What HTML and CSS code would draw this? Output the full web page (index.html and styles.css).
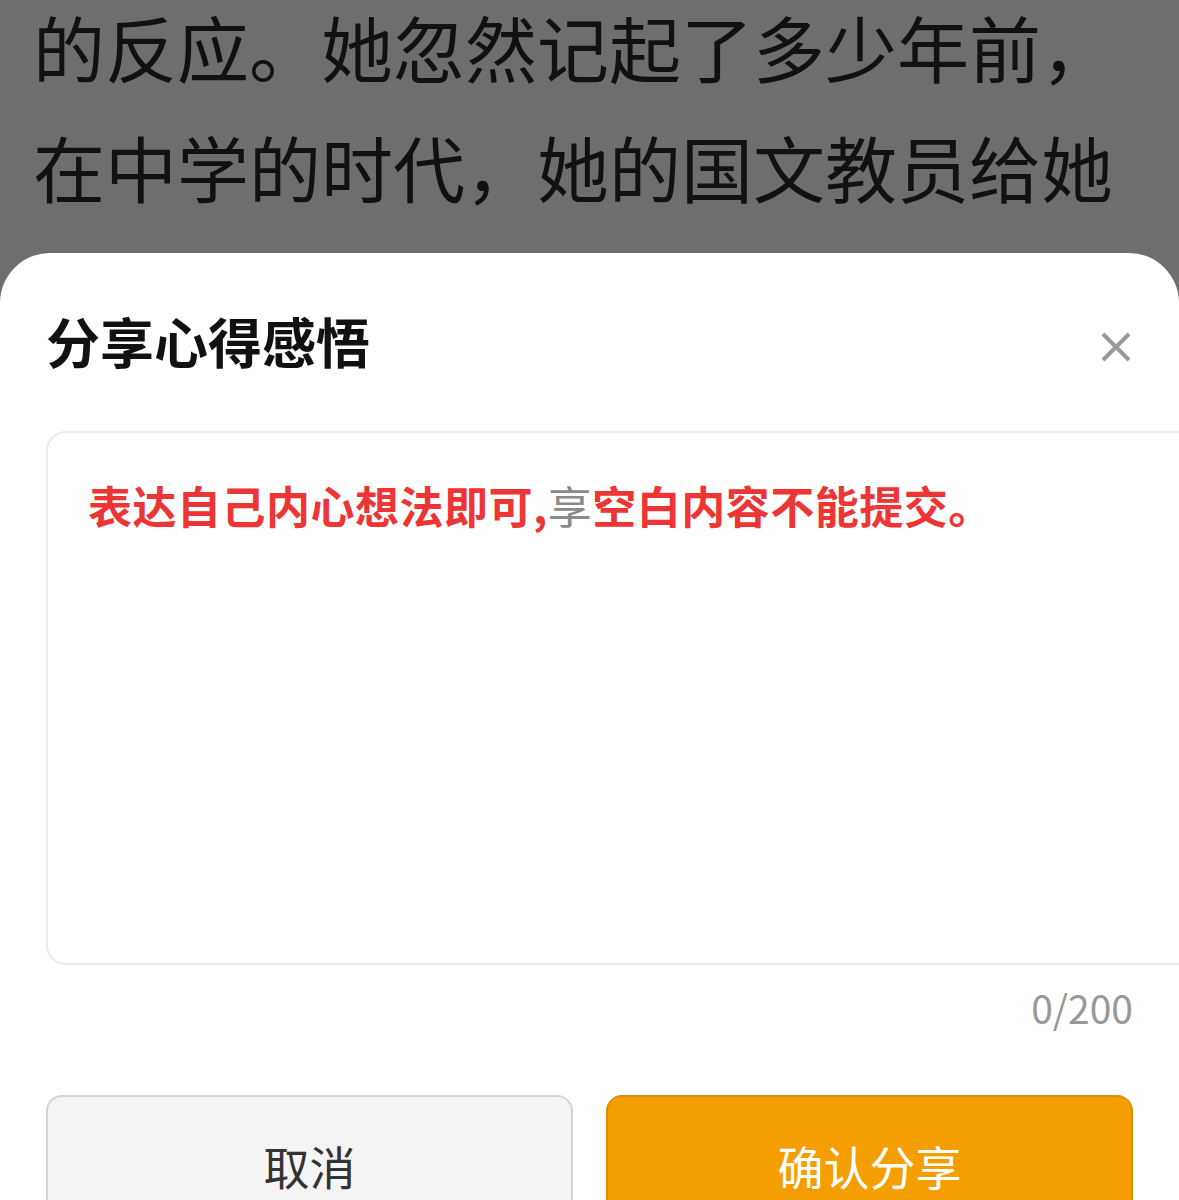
FILE: index.html
```html
<!DOCTYPE html>
<html lang="zh-CN">
<head>
  <meta charset="UTF-8" />
  <meta name="viewport" content="width=device-width, initial-scale=1.0"/>
  <title>分享心得感悟</title>
  <link rel="stylesheet" href="styles.css">
</head>
<body>
  <div class="article">
    <p>的反应。她忽然记起了多少年前，<br>在中学的时代，她的国文教员给她</p>
  </div>

  <div class="sheet">
    <div class="sheet-head">
      <h2>分享心得感悟</h2>
      <button class="close" aria-label="关闭">
        <svg width="32" height="32" viewBox="0 0 32 32">
          <path d="M3 3 L29 29 M29 3 L3 29" stroke="#999" stroke-width="4" fill="none"/>
        </svg>
      </button>
    </div>

    <div class="input-box">
      <p class="hint">表达自己内心想法即可,<span class="ph">享</span>空白内容不能提交。</p>
    </div>
    <div class="counter">0/200</div>

    <div class="actions">
      <button class="btn cancel">取消</button>
      <button class="btn confirm">确认分享</button>
    </div>
  </div>
</body>
</html>
```

FILE: styles.css
```css
body {
  margin: 0;
  padding: 0;
  height: 1200px;
  overflow: hidden;
  background-color: #6e6e6e;
  font-family: "Noto Sans CJK SC", "Noto Sans", sans-serif;
}

.article {
  height: 253px;
  overflow: hidden;
}

.article p {
  margin: -14px 0 0;
  padding: 0 33px;
  font-size: 72px;
  line-height: 120px;
  color: #111;
  white-space: nowrap;
}

.sheet {
  background-color: #fff;
  border-radius: 50px 50px 0 0;
  padding: 0 46px;
  height: 947px;
}

.sheet-head {
  height: 178px;
  display: flex;
  align-items: center;
  justify-content: space-between;
}

.sheet-head h2 {
  margin: 0 0 4px 0;
  font-size: 54px;
  font-weight: 700;
  color: #111;
}

.close {
  margin-top: 10px;
  margin-right: 1px;
  padding: 0;
  border: none;
  background: none;
  width: 32px;
  height: 32px;
}

.input-box {
  box-sizing: border-box;
  height: 534px;
  margin-right: -90px;
  border: 2px solid #ececec;
  border-radius: 20px;
  padding: 42px 40px 0;
}

.hint {
  margin: 0;
  font-size: 44px;
  line-height: 60px;
  font-weight: 700;
  color: #ee3535;
  letter-spacing: 0.5px;
}

.hint .ph {
  font-weight: 400;
  color: #8a8a8a;
}

.counter {
  margin-top: 19px;
  text-align: right;
  font-size: 39px;
  line-height: 46px;
  color: #999;
}

.actions {
  margin-top: 65px;
  display: flex;
  gap: 33px;
}

.btn {
  flex: 1;
  height: 140px;
  border-radius: 16px;
  font-family: "Noto Sans CJK SC", "Noto Sans", sans-serif;
  font-size: 46px;
  padding: 0;
}

.cancel {
  background-color: #f4f4f4;
  border: 2px solid #d4d4d4;
  color: #333;
}

.confirm {
  background-color: #f59e02;
  border: 2px solid #de8e00;
  color: #fff;
}
```
